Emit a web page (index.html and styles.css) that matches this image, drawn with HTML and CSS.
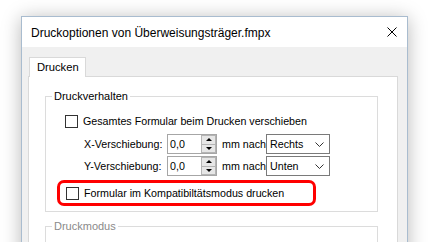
FILE: index.html
```html
<!DOCTYPE html>
<html>
    <head>
        <meta charset="utf-8">
        <title>Druckoptionen</title>
        <link rel="stylesheet" href="styles.css">
    </head>
    <body>
        <div class="dialog">
            <div class="titlebar">
                <div class="title">Druckoptionen von Überweisungsträger.fmpx</div>
                <svg class="close" width="10" height="10" viewBox="0 0 10 10">
                    <path d="M0.5 0.5 L9.5 9.5 M9.5 0.5 L0.5 9.5" stroke="#000" stroke-width="1" fill="none"/>
                </svg>
            </div>
            <div class="body">
                <div class="tabs">
                    <div class="tab active">Drucken</div>
                </div>
                <div class="panel">
                    <fieldset class="group">
                        <legend>Druckverhalten</legend>
                        <div class="row check-row">
                            <span class="checkbox"></span>
                            <span>Gesamtes Formular beim Drucken verschieben</span>
                        </div>
                        <div class="row shift-row">
                            <span class="label">X-Verschiebung:</span>
                            <div class="spin">
                                <span class="value">0,0</span>
                                <div class="spin-btns">
                                    <span class="spin-btn up"></span>
                                    <span class="spin-btn down"></span>
                                </div>
                            </div>
                            <span class="unit">mm nach</span>
                            <div class="select">
                                <span>Rechts</span>
                                <svg class="chevron" width="9" height="5" viewBox="0 0 9 5">
                                    <path d="M0.5 0.5 L4.5 4.5 L8.5 0.5" stroke="#333" fill="none"/>
                                </svg>
                            </div>
                        </div>
                        <div class="row shift-row">
                            <span class="label">Y-Verschiebung:</span>
                            <div class="spin">
                                <span class="value">0,0</span>
                                <div class="spin-btns">
                                    <span class="spin-btn up"></span>
                                    <span class="spin-btn down"></span>
                                </div>
                            </div>
                            <span class="unit">mm nach</span>
                            <div class="select">
                                <span>Unten</span>
                                <svg class="chevron" width="9" height="5" viewBox="0 0 9 5">
                                    <path d="M0.5 0.5 L4.5 4.5 L8.5 0.5" stroke="#333" fill="none"/>
                                </svg>
                            </div>
                        </div>
                        <div class="highlight">
                            <span class="checkbox"></span>
                            <span>Formular im Kompatibiltätsmodus drucken</span>
                        </div>
                    </fieldset>
                    <fieldset class="group disabled">
                        <legend>Druckmodus</legend>
                        <div class="row check-row">
                            <span class="radio"></span>
                        </div>
                    </fieldset>
                </div>
            </div>
        </div>
    </body>
</html>
```

FILE: styles.css
```css
html, body{
    margin:0;
    height:100%;
    overflow:hidden;
}
body{
    background-color:#fff;
    font-family:"Liberation Sans", Arial, sans-serif;
    font-size:10.7px;
    color:#000;
    padding:16px 0 0 21px;
    box-sizing:border-box;
}
.dialog{
    width:387px;
    height:260px;
    box-sizing:border-box;
    border:1px solid #a9bccf;
    background-color:#f0f0f0;
    box-shadow:0 2px 18px rgba(0,0,0,.28);
}
.titlebar{
    height:30px;
    background-color:#fff;
    display:flex;
    align-items:center;
    padding:0 10px 0 9px;
}
.title{
    flex:1;
    font-size:12px;
    padding-top:1px;
}
.body{
    padding:10px 9px 0 6px;
}
.tabs{
    display:flex;
    padding-left:1px;
    margin-bottom:-1px;
    position:relative;
}
.tab{
    height:20px;
    box-sizing:border-box;
    padding:3px 0 0 7px;
    width:57px;
    border:1px solid #d9d9d9;
    border-bottom:none;
    background-color:#fff;
    font-size:11.2px;
}
.panel{
    background-color:#fff;
    border:1px solid #d9d9d9;
    height:200px;
    padding:11px 19px 0 16px;
}
.group{
    margin:0;
    padding:0 0 5px 0;
    border:1px solid #dcdcdc;
    min-width:0;
}
.group legend{
    margin-left:6px;
    padding:0 2px;
    line-height:16px;
    font-size:11px;
}
.group.disabled{
    margin-top:6px;
}
.group.disabled legend{
    color:#8a8a8a;
}
.row{
    display:flex;
    align-items:center;
    white-space:nowrap;
}
.check-row{
    height:20px;
    margin-top:7px;
    padding-left:19px;
}
.checkbox{
    width:11px;
    height:11px;
    border:1px solid #333;
    background-color:#fff;
    margin-right:5px;
    flex:none;
}
.radio{
    width:11px;
    height:11px;
    border:1px solid #bbb;
    border-radius:50%;
}
.shift-row{
    height:20px;
    margin-top:3px;
    padding-left:38px;
}
.shift-row + .shift-row{
    margin-top:2px;
}
.label{
    width:83px;
    flex:none;
}
.spin{
    width:50px;
    height:20px;
    box-sizing:border-box;
    border:1px solid #a6a6a6;
    display:flex;
    align-items:center;
    justify-content:space-between;
    padding-left:2px;
    flex:none;
}
.spin-btns{
    display:flex;
    flex-direction:column;
    width:15px;
    height:18px;
}
.spin-btn{
    flex:1;
    background-color:#e6e6e6;
    border:1px solid #b4b4b4;
    position:relative;
}
.spin-btn.down{
    border-top:none;
}
.spin-btn::after{
    content:"";
    position:absolute;
    left:4px;
    border-left:3px solid transparent;
    border-right:3px solid transparent;
}
.spin-btn.up::after{
    top:2px;
    border-bottom:3px solid #000;
}
.spin-btn.down::after{
    top:2px;
    border-top:3px solid #000;
}
.unit{
    margin:0 1px 0 5px;
    flex:none;
    width:43px;
}
.select{
    width:64px;
    height:20px;
    box-sizing:border-box;
    border:1px solid #7a7a7a;
    display:flex;
    align-items:center;
    justify-content:space-between;
    padding:0 5px 0 3px;
    flex:none;
}
.highlight{
    display:flex;
    align-items:center;
    white-space:nowrap;
    margin:4px 0 0 11px;
    width:259px;
    height:26px;
    box-sizing:border-box;
    border:3px solid #ff0000;
    border-radius:7px;
    padding-left:6px;
}
```
